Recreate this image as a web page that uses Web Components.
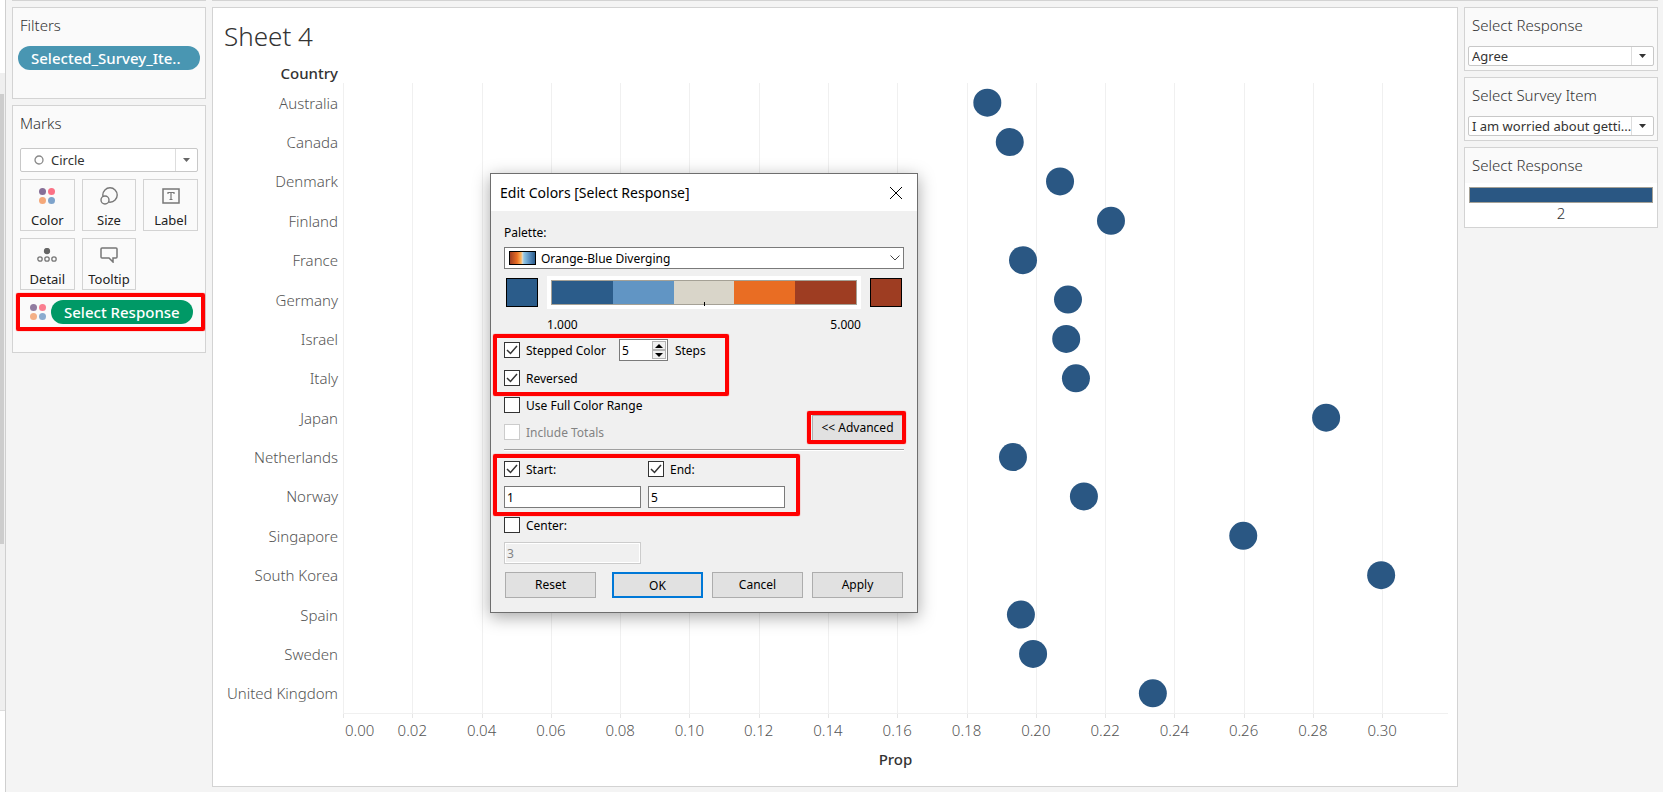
<!DOCTYPE html>
<html lang="en">
<head>
<meta charset="utf-8">
<title>Sheet 4</title>
<style>
    body {
        margin: 0;
        background: #f4f4f4;
        color: #333;
        font-family: "Noto Sans", "Open Sans", sans-serif;
    }
</style>
</head>
<body>
<work-book></work-book>

<script>
// Shared base: every component only has to supply its view
class BaseElement extends HTMLElement {
    get view() { return ''; }

    constructor() {
        super();
        this.connected = false;
        this.attachShadow({mode: 'open'});
    }

    connectedCallback() {
        if (this.connected) {
            return;
        }

        const template = document.createElement('template');
        template.innerHTML = `<style>
                                  :host { display: block; box-sizing: border-box; }
                                  :host([hidden]) { display: none }
                                  *, *::before, *::after { box-sizing: border-box; }
                                  button, input, select { font: inherit; color: inherit; margin: 0; outline: none; }
                              </style>` + this.view;
        this.shadowRoot.appendChild(template.content.cloneNode(true));
        this.connected = true;
    }
}

// Bordered card with a heading
class SidePanel extends BaseElement {
    get view() {
        return `<style>
                    :host { border: 1px solid #d3d3d3; background: #fafafa; }
                    h2 {
                        margin: 0;
                        padding: 5px 7px 2px;
                        font-size: 15px;
                        font-weight: 350;
                        line-height: 24px;
                    }
                </style>
                <h2>${this.getAttribute('heading')}</h2>
                <slot></slot>`;
    }
}

// Rounded field pill
class FieldPill extends BaseElement {
    get view() {
        return `<style>
                    :host {
                        height: 24px;
                        padding: 0 13px;
                        border-radius: 12px;
                        background: var(--pill, #4996b2);
                        color: #fff;
                        font-size: 15px;
                        font-weight: 500;
                        line-height: 24px;
                        white-space: nowrap;
                    }
                </style>
                <slot></slot>`;
    }
}

// Red frame drawn over whatever is slotted in
class CallOut extends BaseElement {
    get view() {
        return `<style>
                    :host { position: relative; }
                    :host::after {
                        content: "";
                        position: absolute;
                        inset: var(--reach, -8px);
                        border: 4px solid #f00;
                        border-radius: 2px;
                        box-shadow: 0 0 1px #f00;
                        pointer-events: none;
                    }
                </style>
                <slot></slot>`;
    }
}

class DropDown extends BaseElement {
    get view() {
        return `<style>
                    :host { position: relative; height: 20px; font-size: 13px; }
                    select {
                        display: block;
                        width: 100%;
                        height: 100%;
                        padding: 0 16px 0 var(--text-start, 3px);
                        border: 1px solid #c8c8c8;
                        border-radius: 2px;
                        background: #fff;
                        appearance: none;
                    }
                    .arrow {
                        position: absolute;
                        inset: 1px 1px 1px auto;
                        width: 22px;
                        border-left: 1px solid #ddd;
                        display: grid;
                        place-items: center;
                        color: var(--arrow, #333);
                        pointer-events: none;
                    }
                    ::slotted(svg) { position: absolute; left: 14px; top: 7px; pointer-events: none; }
                </style>
                <select aria-label="${this.getAttribute('label')}">
                    <option>${this.getAttribute('value')}</option>
                </select>
                <slot></slot>
                <span class="arrow"><svg width="7" height="4"><path d="M0 0h7L3.500 4z" fill="currentColor"/></svg></span>`;
    }
}

// Four colour dots, used on the Color card and on the pill row
class ColorDots extends BaseElement {
    get view() {
        return `<style>svg { display: block; }</style>
                <svg width="16" height="16" viewBox="0 0 16 16">
                    <circle cx="3.500" cy="3.500" r="3.500" fill="#866f97"/>
                    <circle cx="12.500" cy="3.500" r="3.500" fill="#fb7185"/>
                    <circle cx="3.500" cy="12.500" r="3.500" fill="#f4a87a"/>
                    <circle cx="12.500" cy="12.500" r="3.500" fill="#7ea3cb"/>
                </svg>`;
    }
}

class MarkButton extends BaseElement {
    get view() {
        return `<style>
                    button {
                        display: flex;
                        flex-direction: column;
                        align-items: center;
                        width: 100%;
                        height: 52px;
                        padding: 7px 0 0;
                        border: 1px solid #d3d3d3;
                        background: #fafafa;
                        color: #222;
                        font-size: 13px;
                        line-height: 20px;
                    }
                    .icon { display: grid; place-items: center; height: 18px; margin-bottom: 5px; }
                </style>
                <button type="button"><span class="icon"><slot></slot></span>${this.getAttribute('label')}</button>`;
    }
}

class MarksCard extends BaseElement {
    get view() {
        return `<style>
                    .body { padding: 11px 7px 28px; }
                    drop-down { height: 24px; --text-start: 30px; --arrow: #666; }
                    .buttons {
                        display: grid;
                        grid-template-columns: repeat(3, 1fr);
                        gap: 7px;
                        margin: 7px 0 10px;
                    }
                    svg { display: block; fill: none; stroke: #777; }
                    .row { display: flex; align-items: center; gap: 5px; padding: 0 5px 0 10px; }
                    .row color-dots { opacity: .9; }
                    field-pill { flex: 1; --pill: #009966; }
                    call-out { --reach: -7px -7px -7px -4px; }
                </style>
                <side-panel heading="Marks">
                    <div class="body">
                        <drop-down label="Mark type" value="Circle">
                            <svg width="10" height="10"><circle cx="5" cy="5" r="4" stroke="#888" stroke-width="1.300"/></svg>
                        </drop-down>
                        <div class="buttons">
                            <mark-button label="Color"><color-dots></color-dots></mark-button>
                            <mark-button label="Size">
                                <svg width="18" height="18" stroke-width="1.400">
                                    <circle cx="10" cy="8" r="7.200"/>
                                    <circle cx="5" cy="13" r="4" fill="#fafafa"/>
                                </svg>
                            </mark-button>
                            <mark-button label="Label">
                                <svg width="18" height="16" stroke-width="1.500">
                                    <path d="M1 1h16v14H1z"/>
                                    <path d="M6 6V4.500h6V6M9 4.500v7M7.500 11.500h3" stroke-width="1.200"/>
                                </svg>
                            </mark-button>
                            <mark-button label="Detail">
                                <svg width="20" height="14" stroke-width="1.300">
                                    <circle cx="10" cy="3" r="2.500" fill="#666" stroke="#666"/>
                                    <circle cx="3" cy="11" r="2.200"/>
                                    <circle cx="10" cy="11" r="2.200"/>
                                    <circle cx="17" cy="11" r="2.200"/>
                                </svg>
                            </mark-button>
                            <mark-button label="Tooltip">
                                <svg width="18" height="16" stroke-width="1.500">
                                    <path d="M2 1h14q1 0 1 1v8q0 1-1 1h-3v4l-4-4H2q-1 0-1-1V2q0-1 1-1z"/>
                                </svg>
                            </mark-button>
                        </div>
                        <call-out>
                            <div class="row">
                                <color-dots></color-dots>
                                <field-pill>Select Response</field-pill>
                            </div>
                        </call-out>
                    </div>
                </side-panel>`;
    }
}

class DotPlot extends BaseElement {
    // Right end of the x axis
    get max() { return 0.319; }

    get data() {
        return [
            ['Australia', 0.186], ['Canada', 0.1925], ['Denmark', 0.207], ['Finland', 0.2217],
            ['France', 0.1963], ['Germany', 0.2093], ['Israel', 0.2088], ['Italy', 0.2116],
            ['Japan', 0.2838], ['Netherlands', 0.1934], ['Norway', 0.2139], ['Singapore', 0.2599],
            ['South Korea', 0.2997], ['Spain', 0.1957], ['Sweden', 0.1992], ['United Kingdom', 0.2338]
        ];
    }

    x(value) { return (value / this.max * 100).toFixed(2) + '%'; }

    get view() {
        const ticks = Array.from({length: 16}, (_, i) => i * 0.02);
        const step = 100 / this.data.length;

        return `<style>
                    :host {
                        display: flex;
                        flex-direction: column;
                        border: 1px solid #d3d3d3;
                        background: #fff;
                        padding: 8px 9px 17px 11px;
                    }
                    h1 { margin: 0; font-size: 26px; font-weight: 300; line-height: 40px; }
                    .chart {
                        flex: 1;
                        display: grid;
                        grid-template-columns: 119px 1fr;
                        grid-template-rows: 27px 1fr 36px 20px;
                    }
                    .field { font-size: 15px; font-weight: 500; line-height: 20px; }
                    .row-field { padding: 7px 5px 0 0; text-align: right; }
                    .axis-field { grid-area: 4 / 2; text-align: center; }
                    .rows { grid-row: 2; display: grid; grid-auto-rows: 1fr; margin: 0; padding: 0 5px 0 0; list-style: none; }
                    .rows li {
                        align-self: center;
                        text-align: right;
                        white-space: nowrap;
                        font-size: 15px;
                        font-weight: 300;
                        line-height: 20px;
                        color: #555;
                    }
                    svg { display: block; width: 100%; height: 100%; overflow: visible; }
                    .plot { grid-area: 2 / 2; min-height: 0; position: relative; }
                    .plot svg { position: absolute; inset: 0; }
                    .grid rect { width: 1px; height: 100%; fill: #f0f0f0; }
                    .axis { grid-area: 3 / 2; border-top: 1px solid #f0f0f0; }
                    .axis rect { width: 1px; height: 4px; fill: #e6e6e6; }
                    .axis text { font-size: 15px; font-weight: 300; fill: #555; text-anchor: middle; }
                    .axis text.first { text-anchor: start; }
                </style>
                <h1>Sheet 4</h1>
                <div class="chart">
                    <div class="field row-field">Country</div>
                    <ul class="rows">${this.data.map(d => `<li>${d[0]}</li>`).join('')}</ul>
                    <div class="plot">
                        <svg role="img" aria-label="Prop by Country">
                            <g class="grid" shape-rendering="crispEdges">
                                ${ticks.map(t => `<rect x="${this.x(t)}" y="0"/>`).join('')}
                            </g>
                            <g fill="#2a5783">
                                ${this.data.map((d, i) => `<circle cx="${this.x(d[1])}" cy="${(i + 0.5) * step}%" r="14"/>`).join('')}
                            </g>
                        </svg>
                    </div>
                    <div class="axis">
                        <svg>
                            <g shape-rendering="crispEdges">${ticks.map(t => `<rect x="${this.x(t)}" y="0"/>`).join('')}</g>
                            ${ticks.map((t, i) => `<text x="${this.x(t)}" y="22" ${i ? '' : 'class="first" dx="2"'}>${t.toFixed(2)}</text>`).join('')}
                        </svg>
                    </div>
                    <div class="field axis-field">Prop</div>
                </div>`;
    }
}

class CheckBox extends BaseElement {
    get view() {
        const state = ['checked', 'disabled'].filter(a => this.hasAttribute(a)).join(' ');

        return `<style>
                    label { position: relative; display: flex; align-items: center; gap: 6px; height: 16px; line-height: 16px; white-space: nowrap; }
                    input { appearance: none; width: 16px; height: 16px; border: 1px solid #333; background: #fff; }
                    svg { position: absolute; left: 2px; top: 3px; fill: none; stroke: #333; stroke-width: 1.500; visibility: hidden; }
                    .text { padding-top: 2px; }
                    input:checked + svg { visibility: visible; }
                    input:disabled { border-color: #ccc; }
                    :host([disabled]) { color: #838383; }
                </style>
                <label><input type="checkbox" ${state}><svg width="12" height="10"><path d="M1 5l3.500 3.500L11 1"/></svg><span class="text"><slot></slot></span></label>`;
    }
}

class NumberField extends BaseElement {
    get view() {
        return `<style>
                    :host { width: 137px; }
                    input {
                        display: block;
                        width: 100%;
                        height: 22px;
                        padding: 0 2px;
                        border: 1px solid #7a7a7a;
                        background: #fff;
                    }
                    input:disabled { border-color: #ccc; background: #f0f0f0; color: #838383; box-shadow: inset 0 0 0 1px #fff; }
                </style>
                <input type="text" value="${this.getAttribute('value')}" aria-label="${this.getAttribute('label')}" ${this.hasAttribute('disabled') ? 'disabled' : ''}>`;
    }
}

// Text box with up and down buttons
class StepInput extends BaseElement {
    get view() {
        return `<style>
                    :host { display: flex; width: 49px; height: 22px; padding: 1px; border: 1px solid #7a7a7a; background: #fff; }
                    input { width: 31px; border: 0; padding: 0 1px; background: none; }
                    .spin { display: grid; grid-template-rows: 1fr 1fr; flex: 1; }
                    button { display: grid; place-items: center; padding: 0; border: 1px solid #b4b4b4; background: #f0f0f0; }
                    svg { display: block; }
                </style>
                <input type="text" value="${this.getAttribute('value')}" aria-label="Number of steps">
                <span class="spin">
                    <button type="button" aria-label="More steps"><svg width="8" height="4"><path d="M4 0l4 4H0z"/></svg></button>
                    <button type="button" aria-label="Fewer steps"><svg width="8" height="4"><path d="M0 0h8L4 4z"/></svg></button>
                </span>`;
    }
}

class PushButton extends BaseElement {
    get view() {
        return `<style>
                    button {
                        display: block;
                        width: 91px;
                        height: 26px;
                        padding: 0;
                        border: 1px solid #adadad;
                        background: #e1e1e1;
                        color: #000;
                        line-height: 24px;
                        white-space: nowrap;
                    }
                    :host([default]) button { border: 2px solid #0078d7; }
                </style>
                <button type="button"><slot></slot></button>`;
    }
}

class PalettePicker extends BaseElement {
    get view() {
        return `<style>
                    :host { position: relative; }
                    label { display: block; margin-bottom: 5px; line-height: 18px; }
                    .box { position: relative; }
                    select {
                        display: block;
                        width: 100%;
                        height: 22px;
                        padding: 0 24px 0 36px;
                        border: 1px solid #7a7a7a;
                        border-radius: 0;
                        background: #fff;
                        appearance: none;
                    }
                    .swatch {
                        position: absolute;
                        left: 5px;
                        top: 4px;
                        width: 27px;
                        height: 14px;
                        border: 1px solid #000;
                        background: linear-gradient(90deg, #9e3d22, #e96d23 28%, #ffb55a 44%, #d9d5c9 50%, #8fc5e4 56%, #5b8fbf 78%, #2b5c8a);
                        pointer-events: none;
                    }
                    svg { position: absolute; right: 4px; top: 8px; fill: none; stroke: #444; pointer-events: none; }
                </style>
                <label for="palette">Palette:</label>
                <div class="box">
                    <select id="palette"><option>Orange-Blue Diverging</option></select>
                    <span class="swatch"></span>
                    <svg width="10" height="6"><path d="M.500 .500L5 5L9.500 .500"/></svg>
                </div>`;
    }
}

// End swatches around the stepped colour ramp, with its range below
class ColorRamp extends BaseElement {
    get view() {
        const colors = ['#2b5c8a', '#6195c4', '#d9d5c9', '#e96d23', '#9e3d22'];

        return `<style>
                    :host { display: grid; grid-template-columns: 32px 1fr 32px; column-gap: 9px; align-items: center; padding: 0 2px; }
                    button { width: 32px; height: 29px; padding: 0; border: 1px solid #000; }
                    .ramp { position: relative; padding: 4px; background: #fff; }
                    .steps { display: flex; height: 25px; border: 1px solid #a5a196; }
                    .steps i { flex: 1; }
                    .center { position: absolute; left: 50%; bottom: 3px; width: 1px; height: 4px; background: #000; }
                    .range { grid-column: 2; display: flex; justify-content: space-between; padding-top: 7px; line-height: 18px; }
                </style>
                <button type="button" aria-label="Start color" style="background: ${colors[0]}"></button>
                <div class="ramp">
                    <div class="steps">${colors.map(c => `<i style="background: ${c}"></i>`).join('')}</div>
                    <span class="center"></span>
                </div>
                <button type="button" aria-label="End color" style="background: ${colors[4]}"></button>
                <div class="range"><span>1.000</span><span>5.000</span></div>`;
    }
}

class EditColors extends BaseElement {
    get view() {
        return `<style>
                    :host {
                        width: 428px;
                        border: 1px solid #6e6e6e;
                        background: #f0f0f0;
                        color: #000;
                        font-size: 12px;
                        box-shadow: 0 4px 16px rgba(0, 0, 0, .35);
                    }
                    header {
                        display: flex;
                        align-items: center;
                        justify-content: space-between;
                        height: 37px;
                        padding: 0 14px 0 9px;
                        background: #fff;
                    }
                    h2 { margin: 0; font-size: 14px; font-weight: 400; }
                    .close { display: block; padding: 0; border: 0; background: none; }
                    .close svg { display: block; stroke: #000; }
                    form { padding: 13px 13px 14px; }
                    color-ramp { margin: 7px 0 5px; }
                    .options { position: relative; padding-bottom: 9px; border-bottom: 1px solid #a0a0a0; box-shadow: 0 1px #fff; }
                    .stepped { display: flex; align-items: center; height: 22px; margin-bottom: 9px; }
                    .stepped step-input { margin: 0 7px 0 13px; }
                    .stepping { --reach: -5px 175px -10px -11px; }
                    .options > check-box { margin-top: 11px; }
                    .advanced { position: absolute; right: 1px; bottom: 8px; --reach: -4px -3px -3px -5px; }
                    .bounds { display: grid; grid-template-columns: 137px 137px; gap: 9px 7px; margin-top: 11px; }
                    .limits { --reach: -7px 104px -8px -11px; }
                    .middle { margin: 9px 0 8px; display: grid; gap: 9px; }
                    footer { display: flex; gap: 9px; padding: 0 1px; }
                    footer push-button:first-child { margin-right: auto; }
                </style>
                <header>
                    <h2>Edit Colors [Select Response]</h2>
                    <button class="close" type="button" aria-label="Close">
                        <svg width="14" height="14"><path d="M1 1l12 12M13 1L1 13"/></svg>
                    </button>
                </header>
                <form>
                    <palette-picker></palette-picker>
                    <color-ramp></color-ramp>
                    <div class="options">
                        <call-out class="stepping">
                            <div class="stepped">
                                <check-box checked>Stepped Color</check-box>
                                <step-input value="5"></step-input>
                                <span>Steps</span>
                            </div>
                            <check-box checked>Reversed</check-box>
                        </call-out>
                        <check-box>Use Full Color Range</check-box>
                        <check-box disabled>Include Totals</check-box>
                        <call-out class="advanced"><push-button>&lt;&lt; Advanced</push-button></call-out>
                    </div>
                    <call-out class="limits">
                        <div class="bounds">
                            <check-box checked>Start:</check-box>
                            <check-box checked>End:</check-box>
                            <number-field label="Start value" value="1"></number-field>
                            <number-field label="End value" value="5"></number-field>
                        </div>
                    </call-out>
                    <div class="middle">
                        <check-box>Center:</check-box>
                        <number-field label="Center value" value="3" disabled></number-field>
                    </div>
                    <footer>
                        <push-button>Reset</push-button>
                        <push-button default>OK</push-button>
                        <push-button>Cancel</push-button>
                        <push-button>Apply</push-button>
                    </footer>
                </form>`;
    }
}

class ColorLegend extends BaseElement {
    get view() {
        return `<style>
                    :host { margin-top: 4px; padding: 4px; background: #fff; }
                    .bar { height: 16px; border: 1px solid #a5a196; background: #2a5783; }
                    p { margin: 0; text-align: center; font-size: 15px; font-weight: 350; line-height: 20px; }
                </style>
                <div class="bar"></div>
                <p><slot></slot></p>`;
    }
}

// Edge of the data pane with its scroll bar
class PaneEdge extends BaseElement {
    get view() {
        return `<style>
                    :host { display: flex; flex-direction: column; width: 6px; border-right: 1px solid #cfcfcf; background: #fff; }
                    .track { flex: 1; margin-top: 73px; padding-top: 21px; background: #efefef; }
                    .thumb { width: 4px; height: 73%; background: #cdcdcd; }
                    .foot { height: 82px; border-top: 1px solid #ddd; }
                </style>
                <div class="track"><div class="thumb"></div></div>
                <div class="foot"></div>`;
    }
}

class WorkBook extends BaseElement {
    get view() {
        return `<style>
                    :host { position: relative; display: flex; min-height: 100vh; }
                    main {
                        flex: 1;
                        display: grid;
                        grid-template-columns: 194px 1fr 194px;
                        grid-template-rows: 1px 1fr;
                        gap: 6px;
                        padding: 0 5px 5px 6px;
                    }
                    .edge { background: #d3d3d3; }
                    .edge.wide { grid-column: span 2; }
                    aside { display: flex; flex-direction: column; gap: 6px; }
                    .filters { height: 92px; }
                    .filters field-pill { margin: 7px 5px 0; }
                    .controls drop-down { margin: 7px 3px 4px; }
                    edit-colors { position: absolute; left: 490px; top: 173px; }
                </style>
                <pane-edge></pane-edge>
                <main>
                    <div class="edge"></div>
                    <div class="edge wide"></div>
                    <aside>
                        <side-panel class="filters" heading="Filters">
                            <field-pill>Selected_Survey_Ite..</field-pill>
                        </side-panel>
                        <marks-card></marks-card>
                    </aside>
                    <dot-plot></dot-plot>
                    <aside class="controls">
                        <side-panel heading="Select Response">
                            <drop-down label="Select Response" value="Agree"></drop-down>
                        </side-panel>
                        <side-panel heading="Select Survey Item">
                            <drop-down label="Select Survey Item" value="I am worried about getti..."></drop-down>
                        </side-panel>
                        <side-panel heading="Select Response">
                            <color-legend>2</color-legend>
                        </side-panel>
                    </aside>
                </main>
                <edit-colors role="dialog" aria-label="Edit Colors"></edit-colors>`;
    }
}

customElements.define('side-panel', SidePanel);
customElements.define('field-pill', FieldPill);
customElements.define('call-out', CallOut);
customElements.define('drop-down', DropDown);
customElements.define('color-dots', ColorDots);
customElements.define('mark-button', MarkButton);
customElements.define('marks-card', MarksCard);
customElements.define('dot-plot', DotPlot);
customElements.define('check-box', CheckBox);
customElements.define('number-field', NumberField);
customElements.define('step-input', StepInput);
customElements.define('push-button', PushButton);
customElements.define('palette-picker', PalettePicker);
customElements.define('color-ramp', ColorRamp);
customElements.define('edit-colors', EditColors);
customElements.define('color-legend', ColorLegend);
customElements.define('pane-edge', PaneEdge);
customElements.define('work-book', WorkBook);
</script>
</body>
</html>
